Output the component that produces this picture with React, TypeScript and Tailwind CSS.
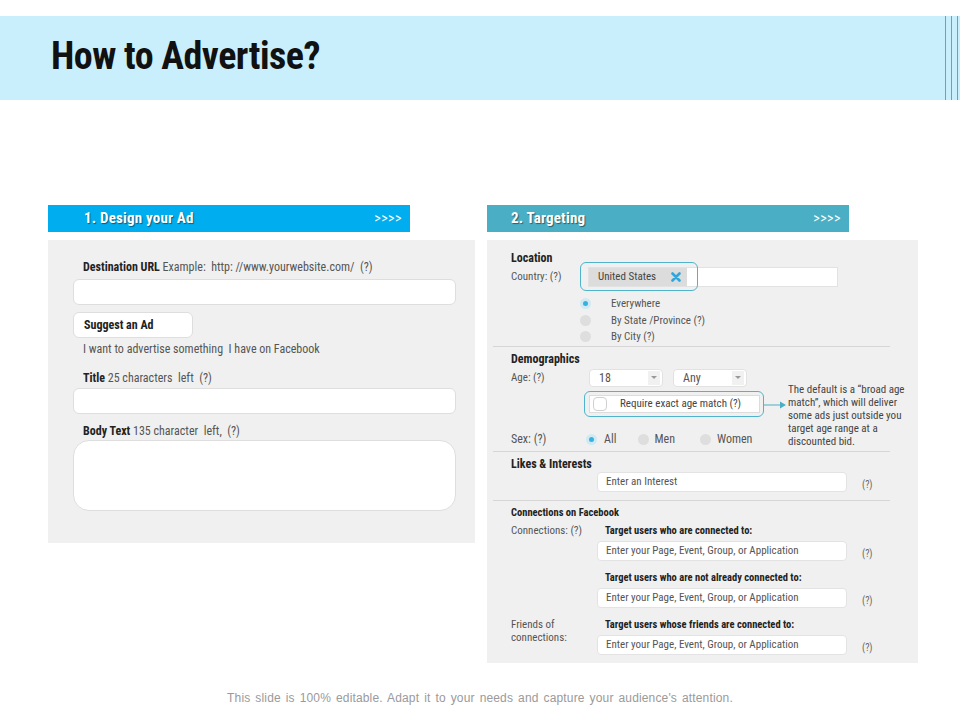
import React from 'react';

const font = "font-['Roboto_Condensed','Liberation_Sans',Arial,sans-serif]";

const Radio: React.FC<{ checked?: boolean }> = ({ checked }) => (
  <span className={`inline-flex h-[11px] w-[11px] shrink-0 items-center justify-center rounded-full ${checked ? 'bg-[#cdeaf5]' : 'bg-[#dedede]'}`}>
    {checked && <span className="h-[5px] w-[5px] rounded-full bg-[#39b1de]" />}
  </span>
);

const SelectBox: React.FC<{ value: string }> = ({ value }) => (
  <div className="flex h-[18px] w-[74px] items-center justify-between rounded-sm border border-[#e2e2e2] bg-white pl-[9px] pr-[2px] text-[12px] text-[#555]">
    <span>{value}</span>
    <span className="flex h-[14px] w-[12px] items-center justify-center bg-[#f1f1f1]">
      <svg width="6" height="4" viewBox="0 0 6 4"><path d="M0 0h6L3 3z" fill="#999" /></svg>
    </span>
  </div>
);

const TextField: React.FC<{ placeholder: string }> = ({ placeholder }) => (
  <div className="flex items-center">
    <div className="flex h-[20px] w-[250px] items-center rounded-sm border border-[#e3e3e3] bg-white pl-[8px] text-[11px] text-[#555]">
      {placeholder}
    </div>
    <span className="ml-[15px] mt-[4px] text-[10px] text-[#666]">(?)</span>
  </div>
);

const SectionHeader: React.FC<{ title: string; color: string; inset: string }> = ({ title, color, inset }) => (
  <div className={`flex h-[27px] w-[362px] items-center justify-between pr-[8px] text-white ${color} ${inset}`}>
    <span className="text-[15px] font-bold tracking-[0.2px] [text-shadow:1px_1px_1px_rgba(0,0,0,0.45)]">{title}</span>
    <span className="text-[14px] tracking-[0.5px]">&gt;&gt;&gt;&gt;</span>
  </div>
);

export default function App() {
  return (
    <div className={`relative h-[720px] w-[960px] overflow-hidden bg-white ${font}`}>
      {/* Title band */}
      <div className="mt-[16px] flex h-[84px] items-center justify-between bg-[#c9effd]">
        <h1 className="ml-[51px] mt-[-4px] text-[38px] font-bold tracking-[-0.5px] text-[#111]">How to Advertise?</h1>
        <div className="mr-[2px] flex h-full gap-[5px]">
          <span className="h-full w-px bg-[#5ba8bf]" />
          <span className="h-full w-px bg-[#5ba8bf]" />
          <span className="h-full w-px bg-[#5ba8bf]" />
        </div>
      </div>

      <div className="mt-[105px] flex gap-[12px] pl-[48px]">
        {/* Design your Ad */}
        <div className="w-[427px]">
          <SectionHeader title="1. Design your Ad" color="bg-[#00adee]" inset="pl-[36px]" />
          <div className="mt-[8px] h-[303px] bg-[#f0f0f0] pl-[25px] pr-[19px] pt-[20px] text-[12px] text-[#555]">
            <div className="pl-[10px] leading-[14px]">
              <b className="text-[#222]">Destination URL</b> Example: &nbsp;http: //www.yourwebsite.com/ &nbsp;(?)
            </div>
            <div className="mt-[5px] h-[26px] rounded-md border border-[#dedede] bg-white" />
            <div className="mt-[7px] flex h-[26px] w-[120px] items-center rounded-md border border-[#dedede] bg-white pl-[10px] font-bold text-[#222]">
              Suggest an Ad
            </div>
            <div className="mt-[4px] pl-[10px] leading-[14px]">I want to advertise something &nbsp;I have on Facebook</div>
            <div className="mt-[15px] pl-[10px] leading-[14px]">
              <b className="text-[#222]">Title</b> 25 characters &nbsp;left &nbsp;(?)
            </div>
            <div className="mt-[3px] h-[26px] rounded-md border border-[#dedede] bg-white" />
            <div className="mt-[10px] pl-[10px] leading-[14px]">
              <b className="text-[#222]">Body Text</b> 135 character &nbsp;left, &nbsp;(?)
            </div>
            <div className="mt-[2px] h-[71px] rounded-2xl border border-[#dedede] bg-white" />
          </div>
        </div>

        {/* Targeting */}
        <div className="w-[431px]">
          <SectionHeader title="2. Targeting" color="bg-[#4aafc5]" inset="pl-[24px]" />
          <div className="mt-[8px] h-[423px] bg-[#f0f0f0] pt-[11px] text-[11px] text-[#555]">
            {/* Location */}
            <div className="pl-[24px]">
              <div className="text-[12px] font-bold leading-[14px] text-[#222]">Location</div>
              <div className="mt-[2px] flex items-center">
                <span className="w-[77px]">Country: (?)</span>
                <div className="relative flex h-[20px] w-[250px] items-center border border-[#e2e2e2] bg-white">
                  <div className="flex h-full w-[98px] items-center justify-between bg-[#dcdcdc] pl-[9px] pr-[6px] text-[#444]">
                    <span>United States</span>
                    <svg width="10" height="10" viewBox="0 0 10 10"><path d="M1.5 1.5l7 7M8.5 1.5l-7 7" stroke="#2fa6dc" strokeWidth="2.6" strokeLinecap="round" /></svg>
                  </div>
                  <div className="absolute left-[-9px] top-[-6px] h-[29px] w-[118px] rounded-md border border-[#4fb4cb]" />
                </div>
              </div>
              <div className="ml-[69px] mt-[10px] flex flex-col gap-[3.5px] leading-[13px]">
                <div className="flex items-center gap-[20px]"><Radio checked /><span>Everywhere</span></div>
                <div className="flex items-center gap-[20px]"><Radio /><span>By State /Province (?)</span></div>
                <div className="flex items-center gap-[20px]"><Radio /><span>By City (?)</span></div>
              </div>
            </div>
            <div className="ml-[6px] mr-[28px] mt-[3px] h-px bg-[#d6d6d6]" />

            {/* Demographics */}
            <div className="relative pl-[24px] pt-[5px]">
              <div className="text-[12px] font-bold leading-[14px] text-[#222]">Demographics</div>
              <div className="mt-[3px] flex items-center">
                <span className="w-[78px]">Age: (?)</span>
                <SelectBox value="18" />
                <div className="w-[10px]" />
                <SelectBox value="Any" />
              </div>
              <div className="ml-[73px] mt-[4px] flex items-center">
                <div className="flex h-[26px] w-[180px] items-center rounded-md border border-[#4fb4cb] py-[3px] pl-[4px] pr-[3px]">
                  <div className="flex h-full w-full items-center border border-[#dcdcdc] bg-white pl-[3px]">
                    <span className="h-[14px] w-[14px] rounded-sm border border-[#d0d0d0] bg-white" />
                    <span className="ml-[13px] text-[#444]">Require exact age match (?)</span>
                  </div>
                </div>
                <svg width="23" height="8" viewBox="0 0 23 8" className="mt-[1px]">
                  <path d="M0 4h17" stroke="#4aafc5" strokeWidth="1" />
                  <path d="M16 0.5l6 3.5-6 3.5z" fill="#4aafc5" />
                </svg>
              </div>
              <div className="mt-[13px] flex items-center text-[12px]">
                <span className="w-[75px]">Sex: (?)</span>
                <div className="flex items-center gap-[7px]"><Radio checked /><span>All</span></div>
                <div className="ml-[22px] flex items-center gap-[5px]"><Radio /><span>Men</span></div>
                <div className="ml-[25px] flex items-center gap-[6px]"><Radio /><span>Women</span></div>
              </div>
              <div className="absolute left-[301px] top-[36px] w-[122px] text-[11px] leading-[13px] text-[#444]">
                The default is a “broad age match”, which will deliver some ads just outside you target age range at a discounted bid.
              </div>
            </div>
            <div className="ml-[6px] mr-[28px] mt-[3px] h-px bg-[#d6d6d6]" />

            {/* Likes & Interests */}
            <div className="pl-[24px] pt-[5px]">
              <div className="text-[12px] font-bold leading-[14px] text-[#222]">Likes &amp; Interests</div>
              <div className="ml-[86px] mt-[1px]"><TextField placeholder="Enter an Interest" /></div>
            </div>
            <div className="ml-[6px] mr-[28px] mt-[8px] h-px bg-[#d6d6d6]" />

            {/* Connections */}
            <div className="pl-[24px] pt-[5px]">
              <div className="text-[10.5px] font-bold leading-[13px] text-[#222]">Connections on Facebook</div>
              <div className="mt-[5px] flex">
                <span className="w-[94px] leading-[13px]">Connections: (?)</span>
                <div className="text-[10.5px] font-bold leading-[13px] text-[#222]">Target users who are connected to:</div>
              </div>
              <div className="ml-[86px] mt-[4px]"><TextField placeholder="Enter your Page, Event, Group, or Application" /></div>
              <div className="ml-[94px] mt-[10px] text-[10.5px] font-bold leading-[13px] text-[#222]">Target users who are not already connected to:</div>
              <div className="ml-[86px] mt-[4px]"><TextField placeholder="Enter your Page, Event, Group, or Application" /></div>
              <div className="mt-[10px] flex">
                <span className="w-[94px] leading-[13px]">Friends of<br />connections:</span>
                <div className="text-[10.5px] font-bold leading-[13px] text-[#222]">Target users whose friends are connected to:</div>
              </div>
              <div className="ml-[86px] mt-[-9px]"><TextField placeholder="Enter your Page, Event, Group, or Application" /></div>
            </div>
          </div>
        </div>
      </div>

      <div className="mt-[26px] text-center font-['Liberation_Sans',Arial,sans-serif] text-[12px] tracking-[0.15px] [word-spacing:1.5px] text-[#9a9a9a]">
        This slide is 100% editable. Adapt it to your needs and capture your audience's attention.
      </div>
    </div>
  );
}
